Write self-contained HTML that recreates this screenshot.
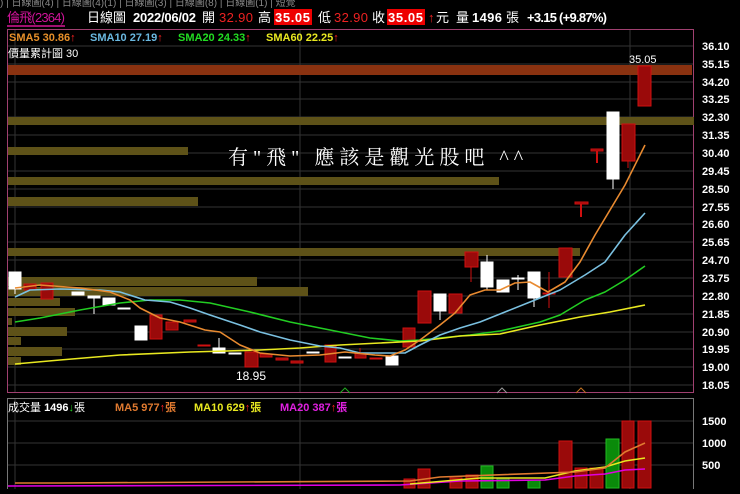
<!DOCTYPE html><html><head><meta charset="utf-8"><style>
body{margin:0;background:#000;width:740px;height:489px;overflow:hidden;font-family:"Liberation Sans","Noto Sans CJK TC",sans-serif}
svg text{font-family:"Liberation Sans","Noto Sans CJK TC",sans-serif}
svg text.ser{font-family:"Liberation Serif","Noto Serif CJK SC",serif}
</style></head><body>
<svg width="740" height="489" xmlns="http://www.w3.org/2000/svg">
<rect width="740" height="489" fill="#000"/>
<text x="0" y="6" font-size="10" fill="#888">)  |  日線圖(4)  |  日線圖(4)(1)  |  日線圖(3)  |  日線圖(8)  |  日線圖(1)  |  短覺</text>
<g font-size="13" font-weight="bold">
<text x="7" y="22" fill="#d1139a" font-weight="normal" textLength="58">倫飛(2364)</text>
<rect x="7" y="25" width="58" height="2" fill="#a01070"/>
<text x="87" y="22" fill="#fff" font-weight="normal">日線圖</text>
<text x="133" y="22" fill="#fff" textLength="63">2022/06/02</text>
<text x="202" y="22" fill="#fff" font-weight="normal">開</text>
<text x="219" y="22" fill="#e22" font-weight="normal" textLength="34">32.90</text>
<text x="258" y="22" fill="#fff" font-weight="normal">高</text>
<rect x="274" y="9" width="38" height="16" fill="#e00"/><text x="275" y="22" fill="#fff" textLength="35">35.05</text>
<text x="318" y="22" fill="#fff" font-weight="normal">低</text>
<text x="334" y="22" fill="#e22" font-weight="normal" textLength="34">32.90</text>
<text x="372" y="22" fill="#fff" font-weight="normal">收</text>
<rect x="387" y="9" width="38" height="16" fill="#e00"/><text x="388" y="22" fill="#fff" textLength="35">35.05</text>
<text x="428" y="22" fill="#e22">↑</text><text x="436" y="22" fill="#fff" font-weight="normal">元</text>
<text x="456" y="22" fill="#fff" font-weight="normal">量</text>
<text x="472" y="22" fill="#fff" textLength="30">1496</text><text x="506" y="22" fill="#fff" font-weight="normal">張</text>
<text x="527" y="22" fill="#fff" textLength="80">+3.15 (+9.87%)</text>
</g>
<!-- main box -->
<rect x="7.5" y="29.5" width="686" height="363" fill="none" stroke="#a04070"/>
<g stroke="#333" stroke-width="1">
<line x1="8" y1="46" x2="693" y2="46"/><line x1="8" y1="64" x2="693" y2="64"/><line x1="8" y1="82" x2="693" y2="82"/><line x1="8" y1="99" x2="693" y2="99"/><line x1="8" y1="117" x2="693" y2="117"/><line x1="8" y1="135" x2="693" y2="135"/><line x1="8" y1="153" x2="693" y2="153"/><line x1="8" y1="171" x2="693" y2="171"/><line x1="8" y1="189" x2="693" y2="189"/><line x1="8" y1="207" x2="693" y2="207"/><line x1="8" y1="224" x2="693" y2="224"/><line x1="8" y1="242" x2="693" y2="242"/><line x1="8" y1="260" x2="693" y2="260"/><line x1="8" y1="278" x2="693" y2="278"/><line x1="8" y1="296" x2="693" y2="296"/><line x1="8" y1="314" x2="693" y2="314"/><line x1="8" y1="332" x2="693" y2="332"/><line x1="8" y1="349" x2="693" y2="349"/><line x1="8" y1="367" x2="693" y2="367"/><line x1="8" y1="385" x2="693" y2="385"/>
<line x1="300" y1="30" x2="300" y2="392"/><line x1="630" y1="30" x2="630" y2="392"/><line x1="15" y1="30" x2="15" y2="392"/>
</g>
<!-- volume profile -->
<g fill="#5e5218">
<rect x="8" y="117" width="686" height="8"/>
<rect x="8" y="147" width="180" height="8"/>
<rect x="8" y="177" width="491" height="8"/>
<rect x="8" y="197" width="190" height="9"/>
<rect x="8" y="248" width="572" height="8"/>
<rect x="8" y="277" width="249" height="9"/>
<rect x="8" y="287" width="300" height="9"/>
<rect x="8" y="298" width="52" height="8"/>
<rect x="8" y="308" width="67" height="8"/>
<rect x="8" y="318" width="4" height="7"/>
<rect x="8" y="327" width="59" height="9"/>
<rect x="8" y="337" width="13" height="8"/>
<rect x="8" y="347" width="54" height="9"/>
<rect x="8" y="357" width="13" height="8"/>
</g>
<rect x="8" y="65" width="684" height="10" fill="#8a3210"/>
<g font-size="11" font-weight="bold">
<text x="9" y="41" fill="#e8902a">SMA5 30.86<tspan fill="#f22">↑</tspan></text>
<text x="90" y="41" fill="#6ab8e0">SMA10 27.19<tspan fill="#f22">↑</tspan></text>
<text x="178" y="41" fill="#22dd22">SMA20 24.33<tspan fill="#f22">↑</tspan></text>
<text x="266" y="41" fill="#e8e820">SMA60 22.25<tspan fill="#f22">↑</tspan></text>
</g>
<text x="8" y="57" font-size="11" fill="#fff">價量累計圖 30</text>
<text x="629" y="63" font-size="11" fill="#fff">35.05</text>
<text x="236" y="380" font-size="12" fill="#fff">18.95</text>
<text class="ser" x="228" y="164" font-size="20" fill="#fff" letter-spacing="5">有"飛"  應該是觀光股吧  ^^</text>
<!-- axis -->
<g font-size="11" font-weight="bold" fill="#fff">
<text x="702" y="50">36.10</text><text x="702" y="68">35.15</text><text x="702" y="86">34.20</text><text x="702" y="103">33.25</text><text x="702" y="121">32.30</text><text x="702" y="139">31.35</text><text x="702" y="157">30.40</text><text x="702" y="175">29.45</text><text x="702" y="193">28.50</text><text x="702" y="211">27.55</text><text x="702" y="228">26.60</text><text x="702" y="246">25.65</text><text x="702" y="264">24.70</text><text x="702" y="282">23.75</text><text x="702" y="300">22.80</text><text x="702" y="318">21.85</text><text x="702" y="336">20.90</text><text x="702" y="353">19.95</text><text x="702" y="371">19.00</text><text x="702" y="389">18.05</text>
<text x="702" y="425">1500</text><text x="702" y="447">1000</text><text x="702" y="469">500</text>
</g>
<!-- candles -->
<g stroke-width="1">
<g fill="#fff" stroke="#fff">
<line x1="15" y1="272" x2="15" y2="294"/><rect x="9" y="272" width="12" height="17"/>
<rect x="72" y="292" width="12" height="3"/>
<line x1="94" y1="296" x2="94" y2="314"/><rect x="88" y="296" width="12" height="2"/>
<rect x="103" y="298" width="12" height="7"/>
<rect x="118" y="308" width="12" height="1"/>
<rect x="135" y="326" width="12" height="14"/>
<line x1="219" y1="338" x2="219" y2="353"/><rect x="213" y="348" width="12" height="5"/>
<rect x="229" y="353" width="12" height="1"/>
<rect x="307" y="352" width="12" height="1"/>
<rect x="339" y="357" width="12" height="1"/>
<rect x="386" y="356" width="12" height="9"/>
<line x1="440" y1="294" x2="440" y2="320"/><rect x="434" y="294" width="12" height="17"/>
<line x1="487" y1="255" x2="487" y2="290"/><rect x="481" y="262" width="12" height="25"/>
<rect x="497" y="280" width="12" height="12"/>
<line x1="518" y1="275" x2="518" y2="290"/><rect x="512" y="278" width="12" height="1"/>
<line x1="534" y1="272" x2="534" y2="307"/><rect x="528" y="272" width="12" height="26"/>
<line x1="613" y1="112" x2="613" y2="189"/><rect x="607" y="112" width="12" height="67"/>
</g>
<g fill="#9a0a0a" stroke="#d01010">
<rect x="24" y="284" width="12" height="6"/>
<rect x="41" y="283" width="12" height="16"/>
<rect x="150" y="315" width="12" height="24"/>
<rect x="166" y="322" width="12" height="8"/>
<rect x="184" y="320" width="12" height="2"/>
<rect x="198" y="345" width="12" height="1"/>
<rect x="245" y="352" width="13" height="15"/>
<rect x="260" y="354" width="12" height="3"/>
<rect x="276" y="358" width="12" height="2"/>
<rect x="291" y="361" width="12" height="2"/>
<rect x="325" y="345" width="11" height="17"/>
<line x1="360" y1="348" x2="360" y2="358"/><rect x="355" y="353" width="11" height="5"/>
<rect x="370" y="358" width="12" height="1"/>
<rect x="403" y="328" width="12" height="19"/>
<rect x="418" y="291" width="13" height="32"/>
<rect x="449" y="294" width="13" height="19"/>
<line x1="471" y1="252" x2="471" y2="282"/><rect x="465" y="252" width="13" height="15"/>
<line x1="549" y1="272" x2="549" y2="308"/><rect x="543" y="293" width="12" height="1"/>
<rect x="559" y="248" width="13" height="29"/>
<line x1="581" y1="203" x2="581" y2="217" stroke-width="2"/><rect x="575" y="202" width="13" height="2"/>
<line x1="597" y1="150" x2="597" y2="163" stroke-width="2"/><rect x="591" y="149" width="12" height="2"/>
<line x1="628" y1="124" x2="628" y2="168"/><rect x="622" y="124" width="13" height="37"/>
<rect x="638" y="66" width="13" height="40"/>
</g>
</g>
<!-- MAs -->
<g fill="none" stroke-width="1.6" stroke-linejoin="round">
<polyline stroke="#22cc22" points="15,322 40,318 80,310 120,303 150,300 180,300 210,303 250,312 290,322 330,330 370,338 400,341 420,340 440,338 470,335 500,331 540,322 560,315 585,300 605,292 625,280 645,266"/>
<polyline stroke="#e8e820" points="15,364 60,360 120,355 190,352 260,350 300,348 340,345 380,343 420,341 460,336 500,334 540,325 580,317 610,312 645,305"/>
<polyline stroke="#7ac0e0" points="15,297 30,290 60,289 100,290 120,292 145,300 170,302 190,308 210,315 240,325 260,332 290,340 320,346 340,348 360,353 390,353 405,353 420,345 440,335 460,328 480,322 505,312 530,302 560,290 585,275 605,262 625,235 645,213"/>
<polyline stroke="#e88a30" points="15,288 40,285 80,288 110,292 130,300 140,308 160,318 180,322 205,330 220,332 240,345 260,353 290,356 320,355 345,352 375,355 390,356 405,350 420,340 440,325 455,313 470,295 485,290 500,290 515,283 530,282 548,292 565,282 580,262 595,235 610,210 625,185 645,145"/>
</g>
<g fill="none" stroke-width="1">
<polyline stroke="#22aa22" points="340,393 345,388 350,393"/>
<polyline stroke="#999" points="497,393 502,388 507,393"/>
<polyline stroke="#c07020" points="576,393 581,388 586,393"/>
</g>
<!-- volume panel -->
<rect x="7.5" y="398.5" width="686" height="92" fill="none" stroke="#777"/>
<g stroke="#333"><line x1="8" y1="421" x2="693" y2="421"/><line x1="8" y1="443" x2="693" y2="443"/><line x1="8" y1="465" x2="693" y2="465"/><line x1="300" y1="399" x2="300" y2="489"/><line x1="630" y1="399" x2="630" y2="489"/><line x1="15" y1="399" x2="15" y2="489"/></g>
<g font-size="11">
<text x="8" y="411" fill="#fff">成交量 <tspan font-weight="bold">1496</tspan><tspan fill="#2c2">↓</tspan>張</text>
<text x="115" y="411" fill="#e07a30" font-weight="bold">MA5 977<tspan fill="#f22">↑</tspan>張</text>
<text x="194" y="411" fill="#e8e820" font-weight="bold">MA10 629<tspan fill="#f22">↑</tspan>張</text>
<text x="280" y="411" fill="#e020e0" font-weight="bold">MA20 387<tspan fill="#f22">↑</tspan>張</text>
</g>
<g fill="#9a0a0a" stroke="#d01010">
<rect x="404" y="479" width="11" height="9"/>
<rect x="418" y="469" width="12" height="19"/>
<rect x="450" y="478" width="12" height="10"/>
<rect x="466" y="475" width="12" height="13"/>
<rect x="559" y="441" width="13" height="47"/>
<rect x="575" y="468" width="12" height="20"/>
<rect x="590" y="468" width="13" height="20"/>
<rect x="622" y="421" width="12" height="67"/>
<rect x="638" y="421" width="13" height="67"/>
</g>
<g fill="#0a8a0a" stroke="#22bb22">
<rect x="481" y="466" width="12" height="22"/>
<rect x="497" y="478" width="12" height="10"/>
<rect x="528" y="480" width="12" height="8"/>
<rect x="606" y="439" width="13" height="49"/>
</g>
<g fill="none" stroke-width="1.6">
<polyline stroke="#e000e0" points="8,486 400,485 460,481 545,480 575,476 605,474 625,470 645,469"/>
<polyline stroke="#e8e820" points="410,484 480,478 545,478 575,471 605,467 625,461 645,458"/>
<polyline stroke="#e07a30" points="15,483 60,483 410,481 440,477 575,472 605,468 625,452 645,443"/>
</g>
</svg>
</body></html>
